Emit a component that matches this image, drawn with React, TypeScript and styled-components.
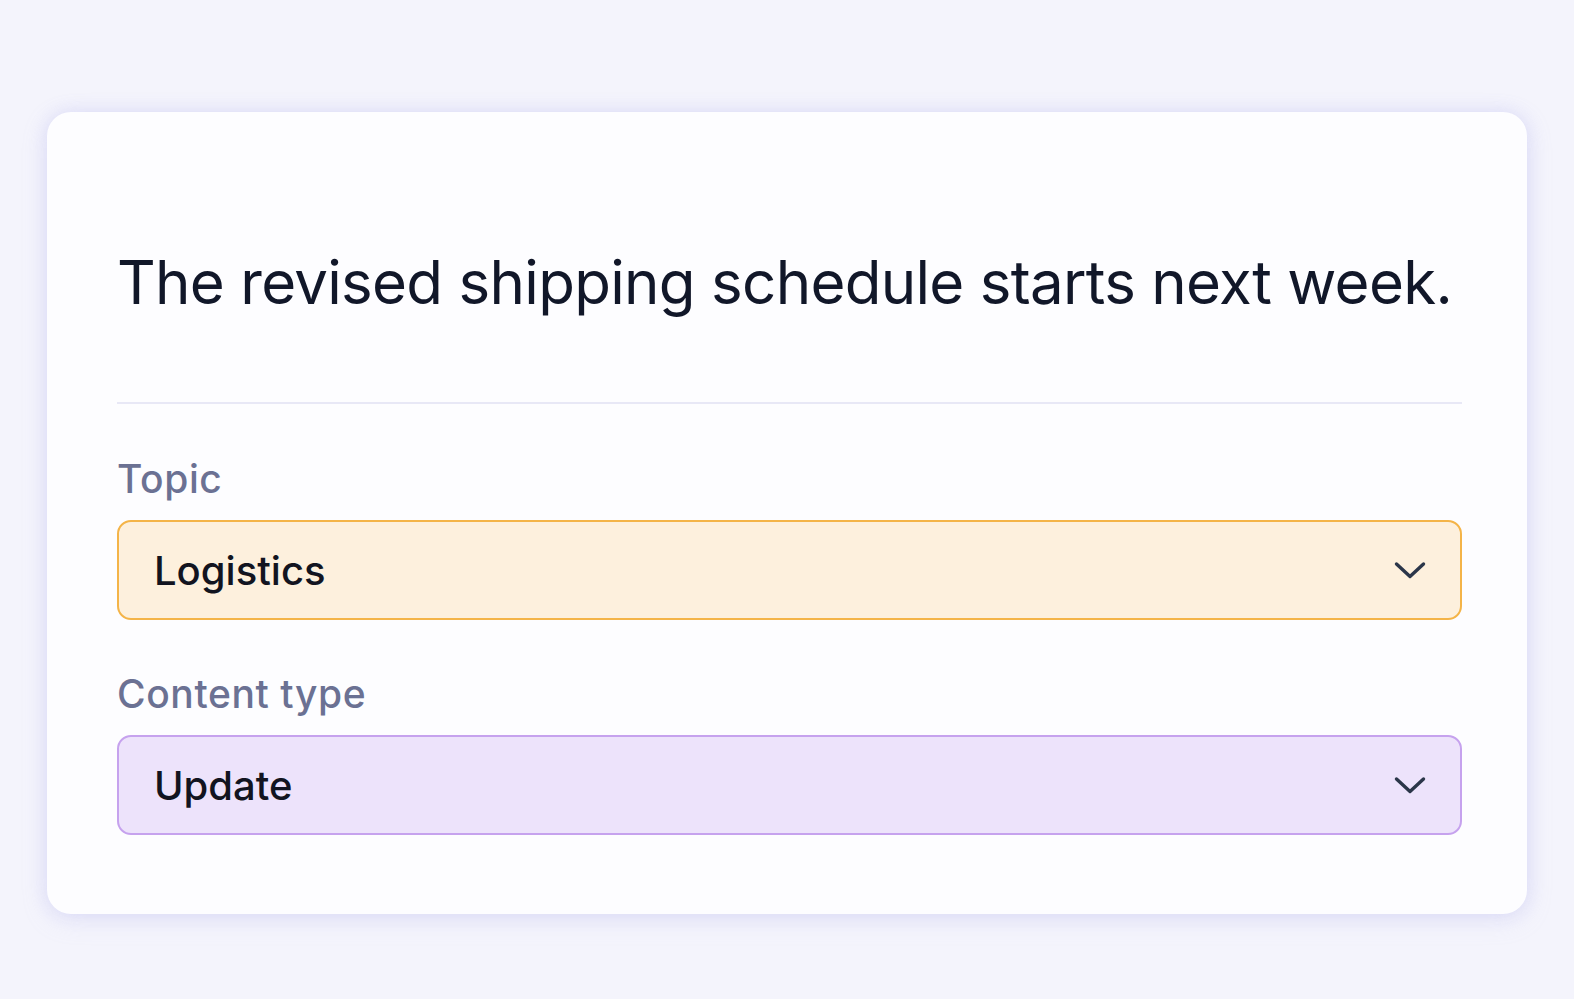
import styled, { createGlobalStyle } from 'styled-components'

type Tone = 'amber' | 'violet'

const tones: Record<Tone, { bg: string; border: string }> = {
  amber: { bg: '#fdf0dd', border: '#f4b448' },
  violet: { bg: '#ede3fb', border: '#c6a2ee' },
}

const GlobalStyle = createGlobalStyle`
  html, body {
    margin: 0;
    padding: 0;
    background: #f4f4fc;
  }
  body {
    font-family: Inter, 'Noto Sans', sans-serif;
    -webkit-font-smoothing: antialiased;
  }
`

const Chevron = () => (
  <svg width="32" height="20" viewBox="0 0 32 20" fill="none">
    <path d="M2.5 4 L16 16.5 L29.5 4" stroke="#2b3649" strokeWidth="3.4" strokeLinecap="round" strokeLinejoin="round" />
  </svg>
)

interface SelectFieldProps {
  label: string
  value: string
  tone: Tone
}

const SelectField = ({ label, value, tone }: SelectFieldProps) => (
  <Field>
    <Label>{label}</Label>
    <SelectBox $tone={tone}>
      <Value>{value}</Value>
      <Chevron />
    </SelectBox>
  </Field>
)

const App = () => (
  <>
    <GlobalStyle />
    <Page>
      <Card>
        <Headline>The revised shipping schedule starts next week.</Headline>
        <Divider />
        <Fields>
          <SelectField label="Topic" value="Logistics" tone="amber" />
          <SelectField label="Content type" value="Update" tone="violet" />
        </Fields>
      </Card>
    </Page>
  </>
)

export default App

const Page = styled.div`
  min-height: 999px;
  box-sizing: border-box;
  padding: 112px 47px 0;
  background: #f4f4fc;
`

const Card = styled.div`
  box-sizing: border-box;
  padding: 133px 65px 79px 70px;
  background: #fdfdff;
  border-radius: 24px;
  box-shadow: 0 0 18px rgba(196, 196, 245, 0.45), 0 6px 24px rgba(200, 200, 240, 0.25);
`

const Headline = styled.h1`
  margin: 0;
  font-size: 60px;
  line-height: 74px;
  font-weight: 400;
  letter-spacing: -0.7px;
  color: #111729;
  white-space: nowrap;
`

const Divider = styled.hr`
  margin: 83px 0 0;
  border: none;
  height: 2px;
  background: #e8e8f6;
`

const Fields = styled.div`
  display: flex;
  flex-direction: column;
  gap: 50px;
  margin-top: 51px;
`

const Field = styled.div`
  display: flex;
  flex-direction: column;
  gap: 18px;
`

const Label = styled.div`
  font-size: 39px;
  line-height: 47px;
  font-weight: 500;
  letter-spacing: 0.6px;
  color: #6b7193;
`

const SelectBox = styled.div<{ $tone: Tone }>`
  display: flex;
  align-items: center;
  justify-content: space-between;
  box-sizing: border-box;
  height: 100px;
  padding: 0 34px 0 35px;
  border-radius: 14px;
  border: 2px solid ${({ $tone }) => tones[$tone].border};
  background: ${({ $tone }) => tones[$tone].bg};
`

const Value = styled.span`
  font-size: 40px;
  font-weight: 500;
  color: #121420;
`
